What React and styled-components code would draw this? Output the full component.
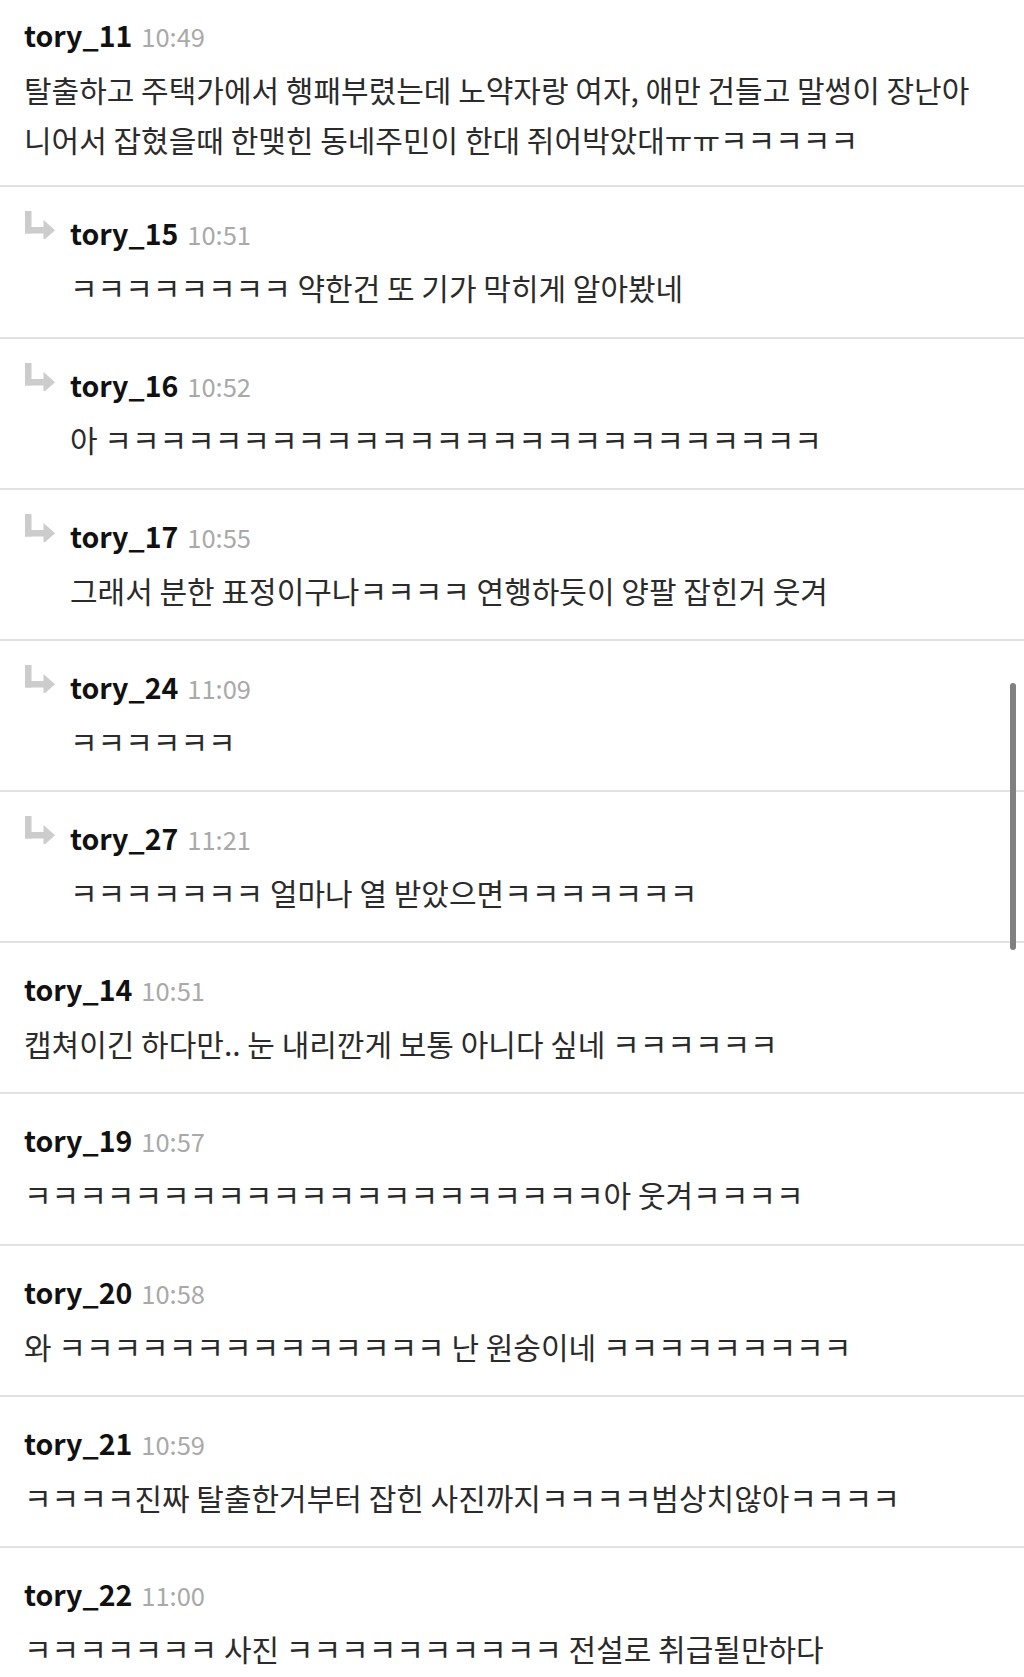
import React from "react";
import styled, { createGlobalStyle } from "styled-components";

const Global = createGlobalStyle`
  html, body {
    margin: 0;
    padding: 0;
    background: #ffffff;
    overflow: hidden;
  }
  body {
    font-family: "Noto Sans CJK KR", "Noto Sans", sans-serif;
    -webkit-font-smoothing: antialiased;
  }
`;

const List = styled.div`
  display: flex;
  flex-direction: column;
  width: 1024px;
`;

const Row = styled.div`
  display: flex;
  align-items: flex-start;
  gap: 16px;
  padding: ${(p) => (p.$first ? "10px 30px 21.33px 24px" : "21px 30px 24.2px 24px")};
  border-bottom: 2px solid #e2e2e2;
`;

const ArrowBox = styled.div`
  flex: 0 0 30px;
  margin-top: 3px;
  margin-left: 1px;
  margin-right: -1px;
  display: flex;
`;

const Body = styled.div`
  flex: 1;
  min-width: 0;
`;

const Meta = styled.div`
  height: 50px;
  line-height: 50px;
  font-size: 28.5px;
  white-space: nowrap;
`;

const Name = styled.span`
  color: #111111;
  font-weight: 700;
`;

const Time = styled.span`
  color: #a9a9a9;
  font-size: 25.5px;
  line-height: 1;
  font-weight: 400;
  margin-left: 9px;
`;

const Text = styled.div`
  margin-top: 4px;
  font-size: 30px;
  line-height: 50px;
  color: #2b2b2b;
  word-break: normal;
  overflow-wrap: anywhere;
`;

const ScrollThumb = styled.div`
  position: fixed;
  left: 1010px;
  top: 683px;
  width: 6px;
  height: 267px;
  border-radius: 3px;
  background: #808080;
`;

const ReplyArrow = () => (
  <svg width="30" height="28" viewBox="0 0 30 28" fill="#cccccc">
    <rect x="0" y="0" width="6.5" height="22.5" />
    <rect x="0" y="16" width="21" height="6.5" />
    <polygon points="18.5,9 30,19.25 18.5,29.5" />
  </svg>
);

const k = (n) => "ㅋ".repeat(n);

const comments = [
  {
    name: "tory_11",
    time: "10:49",
    text:
      "탈출하고 주택가에서 행패부렸는데 노약자랑 여자, 애만 건들고 말썽이 장난아니어서 잡혔을때 한맺힌 동네주민이 한대 쥐어박았대ㅠㅠ" +
      k(5),
    first: true,
  },
  { name: "tory_15", time: "10:51", reply: true, text: k(8) + " 약한건 또 기가 막히게 알아봤네" },
  { name: "tory_16", time: "10:52", reply: true, text: "아 " + k(26) },
  {
    name: "tory_17",
    time: "10:55",
    reply: true,
    text: "그래서 분한 표정이구나" + k(4) + " 연행하듯이 양팔 잡힌거 웃겨",
  },
  { name: "tory_24", time: "11:09", reply: true, text: k(6) },
  { name: "tory_27", time: "11:21", reply: true, text: k(7) + " 얼마나 열 받았으면" + k(7) },
  { name: "tory_14", time: "10:51", text: "캡쳐이긴 하다만.. 눈 내리깐게 보통 아니다 싶네 " + k(6) },
  { name: "tory_19", time: "10:57", text: k(21) + "아 웃겨" + k(4) },
  { name: "tory_20", time: "10:58", text: "와 " + k(14) + " 난 원숭이네 " + k(9) },
  {
    name: "tory_21",
    time: "10:59",
    text: k(4) + "진짜 탈출한거부터 잡힌 사진까지" + k(4) + "범상치않아" + k(4),
  },
  { name: "tory_22", time: "11:00", text: k(7) + " 사진 " + k(10) + " 전설로 취급될만하다" },
];

export default function App() {
  return (
    <>
      <Global />
      <List>
        {comments.map((c) => (
          <Row key={c.name} $first={c.first}>
            {c.reply && (
              <ArrowBox>
                <ReplyArrow />
              </ArrowBox>
            )}
            <Body>
              <Meta>
                <Name>{c.name}</Name>
                <Time>{c.time}</Time>
              </Meta>
              <Text>{c.text}</Text>
            </Body>
          </Row>
        ))}
      </List>
      <ScrollThumb />
    </>
  );
}
